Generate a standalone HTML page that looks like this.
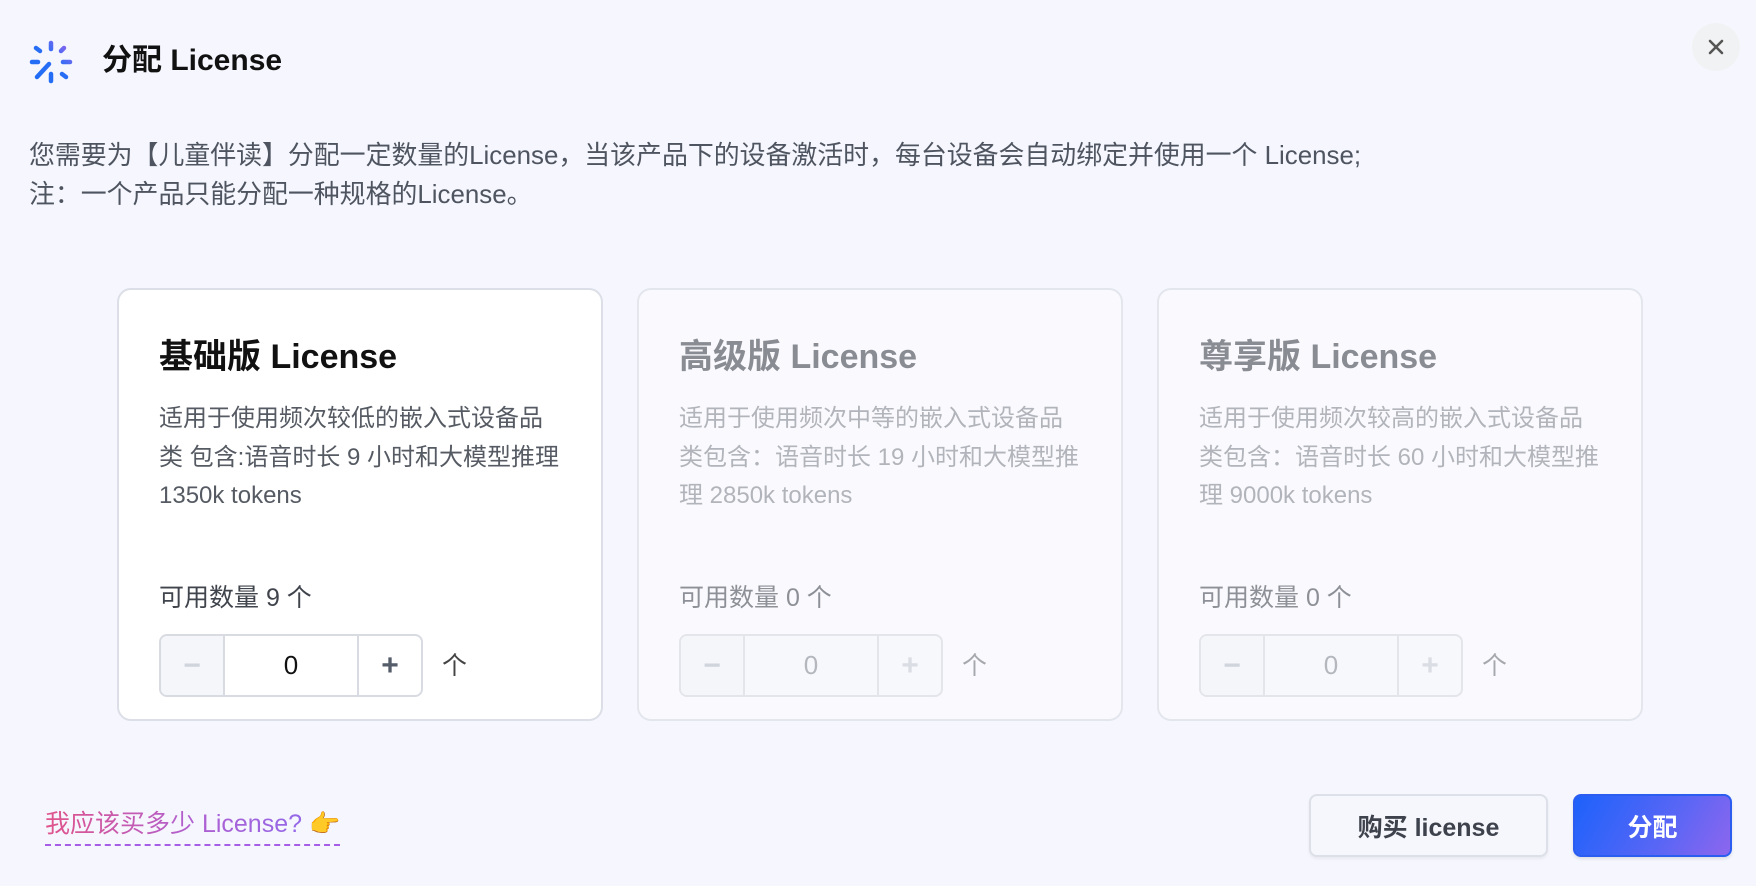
<!DOCTYPE html>
<html><head><meta charset="utf-8"><style>
*{box-sizing:border-box;margin:0;padding:0}
body{width:1756px;height:886px;background:#f6f7fe;font-family:"Liberation Sans","Noto Sans CJK SC",sans-serif;position:relative;overflow:hidden;color:#111}
.abs{position:absolute}
.title{left:102px;top:41px;font-size:30px;font-weight:bold;line-height:40px;color:#111}
.close{left:1692px;top:23px;width:48px;height:48px;border-radius:50%;background:#f1f2f4}
.desc{left:29px;top:137px;font-size:25.9px;line-height:39px;color:#4f5560;white-space:nowrap}
.card{top:288px;width:486px;height:433px;border-radius:14px;border:2px solid #e4e6ee;background:#fafafe}
.card.a{background:#fff;border-color:#dcdfe7}
.card h3{position:absolute;left:40px;top:45px;font-size:34px;font-weight:bold;line-height:44px;color:#8a8c94}
.card.a h3{color:#111}
.card p{position:absolute;left:40px;top:110px;white-space:nowrap;font-size:24px;line-height:38.5px;color:#b2b4bb}
.card.a p{color:#555a63}
.card .q{position:absolute;left:40px;top:290px;font-size:25px;line-height:36px;color:#8e9098}
.card.a .q{color:#40444c}
.st{position:absolute;left:40px;top:344px;width:264px;height:63px;border:2px solid #e3e5eb;border-radius:8px;display:flex;background:#f7f8fc;overflow:hidden}
.card.a .st{border-color:#d8dbe2;background:#fff}
.st div{display:flex;align-items:center;justify-content:center;font-size:26px}
.st .m{width:64px;background:#f5f6f9;color:#d0d4dc;border-right:2px solid #e3e5eb;font-weight:bold;font-size:30px}
.st .v{flex:1;color:#b5b7be;border-right:2px solid #e3e5eb}
.card.a .st .v{color:#111;border-color:#d8dbe2}
.card.a .st .m{border-color:#d8dbe2}
.st .p{width:62px;color:#dadde3;font-weight:bold;font-size:30px}
.card.a .st .p{color:#555c6a}
.card .u{position:absolute;left:323px;top:356px;font-size:25px;color:#a6a8ae}
.card.a .u{color:#444}
.link{left:45px;top:806px;font-size:25px;line-height:36px;background:linear-gradient(90deg,#e0548a,#b060d0 50%,#8a6af0);-webkit-background-clip:text;color:transparent;border-bottom:2px dashed #a65ee6;padding-bottom:2px;white-space:nowrap}
.btn{top:794px;height:63px;border-radius:8px;display:flex;align-items:center;justify-content:center;font-size:25px;font-weight:bold}
.buy{left:1309px;width:239px;border:2px solid #dde0e8;background:#f6f7fc;color:#3d424c;box-shadow:0 2px 3px rgba(0,0,0,.06)}
.ok{left:1573px;width:159px;background:linear-gradient(120deg,#1d62fb,#5a66f5 60%,#8d66ee);color:#fff;border:2px solid #2a5df0;box-shadow:0 2px 3px rgba(0,0,0,.1)}
</style></head><body>
<svg class="abs" style="left:28px;top:40px" width="46" height="46" viewBox="0 0 46 46">
<defs><linearGradient id="g" gradientUnits="userSpaceOnUse" x1="4" y1="42" x2="42" y2="4"><stop offset="0" stop-color="#1f6cf5"/><stop offset="0.6" stop-color="#2a6ef5"/><stop offset="1" stop-color="#9a63ee"/></linearGradient></defs>
<g stroke="url(#g)" stroke-width="4.5" stroke-linecap="round" fill="none">
<line x1="23" y1="3" x2="23" y2="9"/><line x1="23" y1="34" x2="23" y2="41"/>
<line x1="4" y1="22" x2="10" y2="22"/><line x1="35" y1="22" x2="42" y2="22"/>
<line x1="8" y1="8" x2="12" y2="11"/><line x1="34" y1="34" x2="38" y2="37"/>
<line x1="36" y1="8" x2="33" y2="11"/><line x1="21" y1="24" x2="9" y2="37"/>
</g></svg>
<div class="abs title">分配 License</div>
<div class="abs close"><svg width="48" height="48" viewBox="0 0 48 48"><path d="M18 18L30 30M30 18L18 30" stroke="#555" stroke-width="2.6" stroke-linecap="round"/></svg></div>
<div class="abs desc">您需要为【儿童伴读】分配一定数量的License，当该产品下的设备激活时，每台设备会自动绑定并使用一个 License;<br>注：一个产品只能分配一种规格的License。</div>

<div class="abs card a" style="left:117px">
<h3>基础版 License</h3>
<p>适用于使用频次较低的嵌入式设备品<br>类 包含:语音时长 9 小时和大模型推理<br>1350k tokens</p>
<div class="q">可用数量 9 个</div>
<div class="st"><div class="m">−</div><div class="v">0</div><div class="p">+</div></div>
<div class="u">个</div>
</div>
<div class="abs card" style="left:637px">
<h3>高级版 License</h3>
<p>适用于使用频次中等的嵌入式设备品<br>类包含：语音时长 19 小时和大模型推<br>理 2850k tokens</p>
<div class="q">可用数量 0 个</div>
<div class="st"><div class="m">−</div><div class="v">0</div><div class="p">+</div></div>
<div class="u">个</div>
</div>
<div class="abs card" style="left:1157px">
<h3>尊享版 License</h3>
<p>适用于使用频次较高的嵌入式设备品<br>类包含：语音时长 60 小时和大模型推<br>理 9000k tokens</p>
<div class="q">可用数量 0 个</div>
<div class="st"><div class="m">−</div><div class="v">0</div><div class="p">+</div></div>
<div class="u">个</div>
</div>

<div class="abs link">我应该买多少 License? <span style="color:#f2b530;-webkit-text-fill-color:#f2b530">👉</span></div>
<div class="abs btn buy">购买 license</div>
<div class="abs btn ok">分配</div>
</body></html>
